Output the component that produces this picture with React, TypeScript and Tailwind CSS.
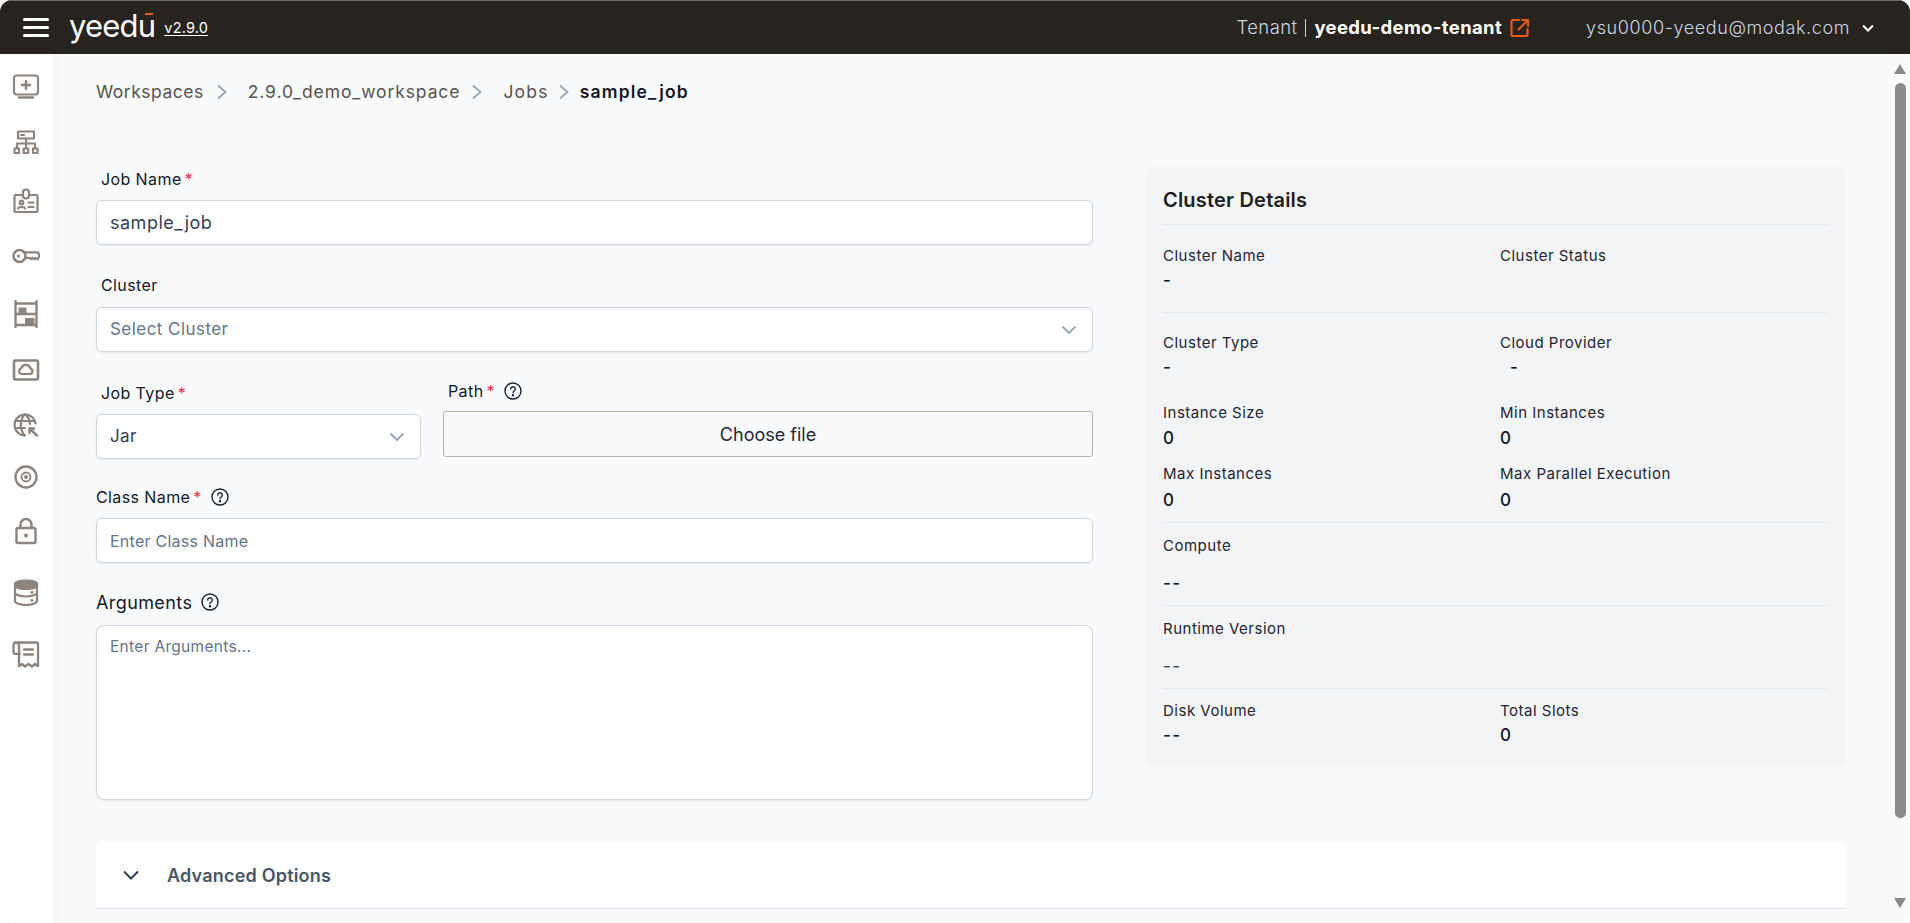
import React from "react";

const font = { fontFamily: "Inter, 'Noto Sans', sans-serif" };

function Ico({ children, w = 28, h = 28, vb = "0 0 28 28" }: { children: React.ReactNode; w?: number; h?: number; vb?: string }) {
  return (
    <svg width={w} height={h} viewBox={vb} fill="none" stroke="#8d847d" strokeWidth="2.200" strokeLinecap="round" strokeLinejoin="round">
      {children}
    </svg>
  );
}

const icons: [string, React.ReactNode][] = [
  ["mt-[19px]", <Ico><rect x="2" y="2.500" width="24" height="19" rx="2.500" /><path d="M14 8v8M10 12h8" strokeWidth="2.400" /><path d="M7 24.500h14" strokeWidth="2.600" /></Ico>],
  ["mt-[28px]", <Ico><rect x="6" y="2.500" width="16" height="7" /><path d="M9 6h3M14 9.500v5M5 19v-4.500h18V19M14 14.500V19" /><rect x="2.500" y="19.500" width="4.500" height="4.500" /><rect x="11.700" y="19.500" width="4.500" height="4.500" /><rect x="21" y="19.500" width="4.500" height="4.500" /></Ico>],
  ["mt-[30px]", <Ico><path d="M10 8H3.500a1 1 0 0 0-1 1v15a1 1 0 0 0 1 1h21a1 1 0 0 0 1-1V9a1 1 0 0 0-1-1H18" /><rect x="11" y="2.500" width="6" height="9" rx="3" /><circle cx="9.500" cy="15.500" r="1.800" /><path d="M6 21.500c.5-2 6.500-2 7 0M16.500 15.500h5M16.500 20h5" /></Ico>],
  ["mt-[27px]", <Ico><circle cx="7.500" cy="14" r="6" strokeWidth="2.500" /><circle cx="6.500" cy="14" r="1.600" fill="#8d847d" stroke="none" /><path d="M13 10.300h13l1.500 3.700-2 3.300-2-1.500-1.500 1.500-1.500-1.500-1.500 1.500-1.500-1.500H13" strokeWidth="2.300" /></Ico>],
  ["mt-[30px]", <Ico><path d="M3.500 1v26M24.500 1v26M3.500 3.500h21M3.500 14h21M3.500 25h21" strokeWidth="2.400" /><rect x="6.500" y="7.500" width="8" height="6.500" fill="#8d847d" stroke="none" /><rect x="13" y="18" width="9.500" height="6.500" fill="#8d847d" stroke="none" /></Ico>],
  ["mt-[28px]", <Ico><rect x="2" y="4.500" width="24" height="19" rx="1.500" strokeWidth="2.600" /><path d="M9.500 18a3 3 0 0 1-.2-5.800 4.800 4.800 0 0 1 9.200.4 2.800 2.800 0 0 1-.2 5.400z" /></Ico>],
  ["mt-[27px]", <Ico><path d="M23.500 12.500A10.500 10.500 0 1 0 13 24.500" /><path d="M3 10h19M3 17h10M12.500 3.500c-5 6-5 14.500 0 21M14 3.500c2.500 3 3.800 6 4 9.500" /><path d="M17.500 17.500l7.500 7M17.500 17.500v4.500M17.500 17.500H22" strokeWidth="2.400" /></Ico>],
  ["mt-[24px]", <Ico><circle cx="14" cy="14" r="10.500" strokeWidth="2.400" /><circle cx="14" cy="14" r="4.500" strokeWidth="1.800" /><circle cx="14" cy="14" r="2" fill="#8d847d" stroke="none" /></Ico>],
  ["mt-[26px]", <Ico><rect x="4.500" y="11" width="19" height="15" rx="1.500" strokeWidth="2.400" /><path d="M8.500 11V7.500a5.500 5.500 0 0 1 11 0V11" strokeWidth="2.400" /><circle cx="14" cy="18.500" r="2" fill="#8d847d" stroke="none" /></Ico>],
  ["mt-[33px]", <Ico><path d="M2 5.500C2 3 7.500 1.500 14 1.500S26 3 26 5.500V8c0 2.500-5.500 4-12 4S2 10.500 2 8z" fill="#8d847d" stroke="none" /><path d="M3 6v17c0 2.200 5 4 11 4s11-1.800 11-4V6" strokeWidth="2.200" /><path d="M3 14.500c0 2.200 5 4 11 4s11-1.800 11-4" strokeWidth="2.200" /><circle cx="20" cy="14.500" r="1.400" fill="#8d847d" stroke="none" /><circle cx="20" cy="22.500" r="1.400" fill="#8d847d" stroke="none" /></Ico>],
  ["mt-[34px]", <Ico><path d="M7 2.500h17.500a1.500 1.500 0 0 1 1.500 1.500v22l-3-2-3 2.500-3.500-2.500-3.500 2.500-3-2.500-3 2V5.500c0-1.700-1-3-3-3s-2.500 1.300-2.500 3v6.500c0 1 .8 1.800 1.800 1.800H8" strokeWidth="2.300" /><path d="M12 9.500h9M12 14.500h9" strokeWidth="2.300" /></Ico>],
];

function Star() {
  return <span className="text-[#ef2b4f] ml-[3px] text-[16px] leading-none">*</span>;
}

function Help() {
  return (
    <svg width="18" height="18" viewBox="0 0 18 18" fill="none" stroke="#1b2333" strokeWidth="1.400" strokeLinecap="round">
      <circle cx="9" cy="9" r="8" />
      <path d="M6.700 7a2.300 2.300 0 1 1 3.500 2c-.8.500-1.200 1-1.200 1.800" />
      <circle cx="9" cy="13.200" r=".5" fill="#1b2333" />
    </svg>
  );
}

function Chevron() {
  return (
    <svg width="18" height="18" viewBox="0 0 18 18" fill="none" stroke="#94a3b8" strokeWidth="1.800">
      <path d="M2.500 5.500L9 12l6.500-6.500" />
    </svg>
  );
}

function CrumbSep({ cls }: { cls: string }) {
  return (
    <svg className={cls} width="12" height="16" viewBox="0 0 12 16" fill="none" stroke="#94a3b8" strokeWidth="1.700">
      <path d="M2 1.500L9.500 8 2 14.500" />
    </svg>
  );
}

const boxCls = "bg-white border border-[#cbd5e1] rounded-[6px] shadow-[0_1px_2px_rgba(15,23,42,0.08)]";
const labelCls = "text-[16px] text-[#111827] tracking-[0.4px]";

function Cell({ label, value, cls, valueCls, w = "w-[328px]" }: { label: string; value?: string; cls?: string; valueCls?: string; w?: string }) {
  return (
    <div className={w + " shrink-0 " + (cls ?? "")}>
      <div className="text-[15px] leading-[20px] text-[#1e2433] tracking-[0.5px]">{label}</div>
      {value !== undefined && <div className={"text-[17px] leading-[24px] text-[#111827] font-medium " + (valueCls ?? "")}>{value}</div>}
    </div>
  );
}

export default function App() {
  return (
    <div className="w-[1910px] h-[923px] overflow-hidden bg-[#f9fafc] rounded-[12px] flex flex-col" style={font}>
      <header className="h-[54px] shrink-0 bg-[#27241f] flex items-center pl-[23px] pr-[35px] text-white border-t border-[#6b6b6b]">
        <div className="flex flex-col gap-[5px] w-[26px]">
          <div className="h-[3px] bg-white rounded" />
          <div className="h-[3px] bg-white rounded" />
          <div className="h-[3px] bg-white rounded" />
        </div>
        <div className="relative ml-[20px] h-[40px] flex items-center">
          <span className="text-[31px] font-normal leading-none tracking-[-0.8px] mt-[-4px]">yeedu</span>
          <div className="absolute left-[76px] top-[5px] w-[8px] h-[2.500px] bg-[#e8590c]" />
        </div>
        <span className="ml-[9px] text-[14.500px] underline underline-offset-2 tracking-[0.2px]">v2.9.0</span>
        <div className="flex-1" />
        <span className="text-[18.500px] text-[#cbd5e1] font-light tracking-[0.4px]">Tenant</span>
        <span className="w-px h-[18px] bg-[#cbd5e1] ml-[8px] mr-[8px]" />
        <span className="text-[18.500px] font-bold tracking-[0.35px]">yeedu-demo-tenant</span>
        <svg className="ml-[8px]" width="20" height="20" viewBox="0 0 20 20" fill="none" stroke="#e8590c" strokeWidth="2.200" strokeLinecap="round" strokeLinejoin="round">
          <path d="M9 2H3a1.500 1.500 0 0 0-1.500 1.500v13A1.500 1.500 0 0 0 3 18h13a1.500 1.500 0 0 0 1.500-1.500V11" />
          <path d="M8.500 11.500L17.500 2.500M12 2h6v6" />
        </svg>
        <span className="ml-[56px] text-[18px] text-[#cbd5e1] font-light tracking-[0.6px]">ysu0000-yeedu@modak.com</span>
        <svg className="ml-[11px]" width="14" height="14" viewBox="0 0 14 14" fill="none" stroke="#fff" strokeWidth="2">
          <path d="M2 4.500L7 9.500l5-5" />
        </svg>
      </header>

      <div className="flex flex-1 min-h-0">
        <aside className="w-[53px] shrink-0 bg-white flex flex-col items-center pr-[1px] shadow-[2px_0_6px_rgba(15,23,42,0.05)]">
          {icons.map(([m, ic], i) => (
            <div key={i} className={m + " h-[28px] flex items-center justify-center"}>{ic}</div>
          ))}
        </aside>

        <main className="flex-1 min-w-0 pl-[43px] pr-[45px] pt-[28px]">
          <nav className="flex items-center h-[20px] text-[17.500px] text-[#57534e]">
            <span className="tracking-[0.5px]">Workspaces</span>
            <CrumbSep cls="ml-[12px]" />
            <span className="ml-[20px] tracking-[0.9px]">2.9.0_demo_workspace</span>
            <CrumbSep cls="ml-[11px]" />
            <span className="ml-[20px] tracking-[1.2px]">Jobs</span>
            <CrumbSep cls="ml-[9px]" />
            <span className="ml-[10px] font-semibold text-[#111827] tracking-[1.2px]">sample_job</span>
          </nav>

          <div className="flex mt-[65px]">
            <div className="w-[997px] shrink-0">
              <div className={"pl-[5px] leading-[20px] flex items-center h-[20px] mt-[2px] " + labelCls}>Job Name<Star /></div>
              <div className={boxCls + " h-[45px] mt-[11px] flex items-center pl-[13px] text-[18px] text-[#334155] tracking-[0.5px]"}>sample_job</div>

              <div className={"pl-[5px] leading-[20px] h-[20px] mt-[30px] " + labelCls}>Cluster</div>
              <div className={boxCls + " h-[45px] mt-[12px] flex items-center justify-between pl-[13px] pr-[14px] text-[17px] text-[#64748b] tracking-[0.45px]"}>Select Cluster<Chevron /></div>

              <div className="flex mt-[29px]">
                <div className="w-[325px] shrink-0">
                  <div className={"pl-[5px] h-[20px] mt-[2px] flex items-center " + labelCls}>Job Type<Star /></div>
                  <div className={boxCls + " h-[45px] mt-[11px] flex items-center justify-between pl-[13px] pr-[14px] text-[17px] text-[#334155] tracking-[0.4px]"}>Jar<Chevron /></div>
                </div>
                <div className="ml-[22px] flex-1">
                  <div className={"pl-[5px] h-[20px] flex items-center " + labelCls}>Path<Star /><span className="ml-[9px]"><Help /></span></div>
                  <div className="h-[46px] mt-[10px] border border-[#b8b4ad] bg-[#f9fafb] rounded-[3px] flex items-center justify-center text-[18px] text-[#1f2937]">Choose file</div>
                </div>
              </div>

              <div className={"h-[20px] mt-[28px] flex items-center " + labelCls}>Class Name<Star /><span className="ml-[9px]"><Help /></span></div>
              <div className={boxCls + " h-[45px] mt-[11px] flex items-center pl-[13px] text-[16px] text-[#64748b] tracking-[0.25px]"}>Enter Class Name</div>

              <div className="h-[20px] mt-[29px] flex items-center text-[18px] text-[#111827] tracking-[0.4px]">Arguments<span className="ml-[9px]"><Help /></span></div>
              <div className={boxCls + " h-[175px] mt-[13px] pl-[13px] pt-[9px] text-[15.500px] text-[#64748b] tracking-[0.3px] rounded-[8px]"}>Enter Arguments...</div>
            </div>

            <section className="ml-[53px] w-[699px] h-[600px] bg-[#f3f4f6] rounded-[8px] px-[17px]">
              <div className="h-[58px] pt-[20px] border-b border-[#dfe6ef] text-[20px] font-semibold leading-[26px] text-[#1f2021] tracking-[0.2px]">Cluster Details</div>
              <div className="h-[88px] border-b border-[#e2e8f0] flex pt-[21px]">
                <Cell label="Cluster Name" value="-" valueCls="mt-[2px]" w="w-[337px]" />
                <Cell label="Cluster Status" />
              </div>
              <div className="flex pt-[20px] h-[90px]">
                <Cell label="Cluster Type" value="-" valueCls="mt-[2px]" w="w-[337px]" />
                <Cell label="Cloud Provider" value="-" valueCls="mt-[2px] pl-[10px]" />
              </div>
              <div className="flex h-[61px]">
                <Cell label="Instance Size" value="0" valueCls="mt-[3px]" w="w-[337px]" />
                <Cell label="Min Instances" value="0" valueCls="mt-[3px]" />
              </div>
              <div className="h-[59px] border-b border-[#e2e8f0] flex">
                <Cell label="Max Instances" value="0" valueCls="mt-[4px]" w="w-[337px]" />
                <Cell label="Max Parallel Execution" value="0" valueCls="mt-[4px]" />
              </div>
              <div className="h-[83px] border-b border-[#e2e8f0] pt-[13px]">
                <Cell label="Compute" />
                <div className="mt-[15px] text-[17px] leading-[24px] text-[#111827] font-medium tracking-[1.500px]">--</div>
              </div>
              <div className="h-[83px] border-b border-[#e2e8f0] pt-[13px]">
                <Cell label="Runtime Version" />
                <div className="mt-[15px] text-[17px] leading-[24px] text-[#374151] tracking-[1.500px]">--</div>
              </div>
              <div className="flex pt-[12px]">
                <Cell label="Disk Volume" value="--" valueCls="mt-[2px] tracking-[1.500px]" w="w-[337px]" />
                <Cell label="Total Slots" value="0" valueCls="mt-[2px]" />
              </div>
            </section>
          </div>

          <div className="mt-[42px] h-[67px] bg-white rounded-t-[8px] border-b border-[#dbe4f0] flex items-center pl-[26px]">
            <svg width="18" height="18" viewBox="0 0 18 18" fill="none" stroke="#334155" strokeWidth="2">
              <path d="M2 5.500L9 12.500l7-7" />
            </svg>
            <span className="ml-[27px] text-[18px] font-semibold text-[#475569] tracking-[0.2px]">Advanced Options</span>
          </div>
        </main>

        <div className="w-[20px] shrink-0 bg-[#fafafa] flex flex-col items-center pt-[10px] pb-[15px]">
          <div className="w-0 h-0 border-l-[6.500px] border-r-[6.500px] border-b-[10px] border-l-transparent border-r-transparent border-b-[#8a8a8a]" />
          <div className="mt-[9px] w-[11px] h-[735px] bg-[#8a8a8a] rounded-full" />
          <div className="flex-1" />
          <div className="w-0 h-0 border-l-[6.500px] border-r-[6.500px] border-t-[10px] border-l-transparent border-r-transparent border-t-[#8a8a8a]" />
        </div>
      </div>
    </div>
  );
}
